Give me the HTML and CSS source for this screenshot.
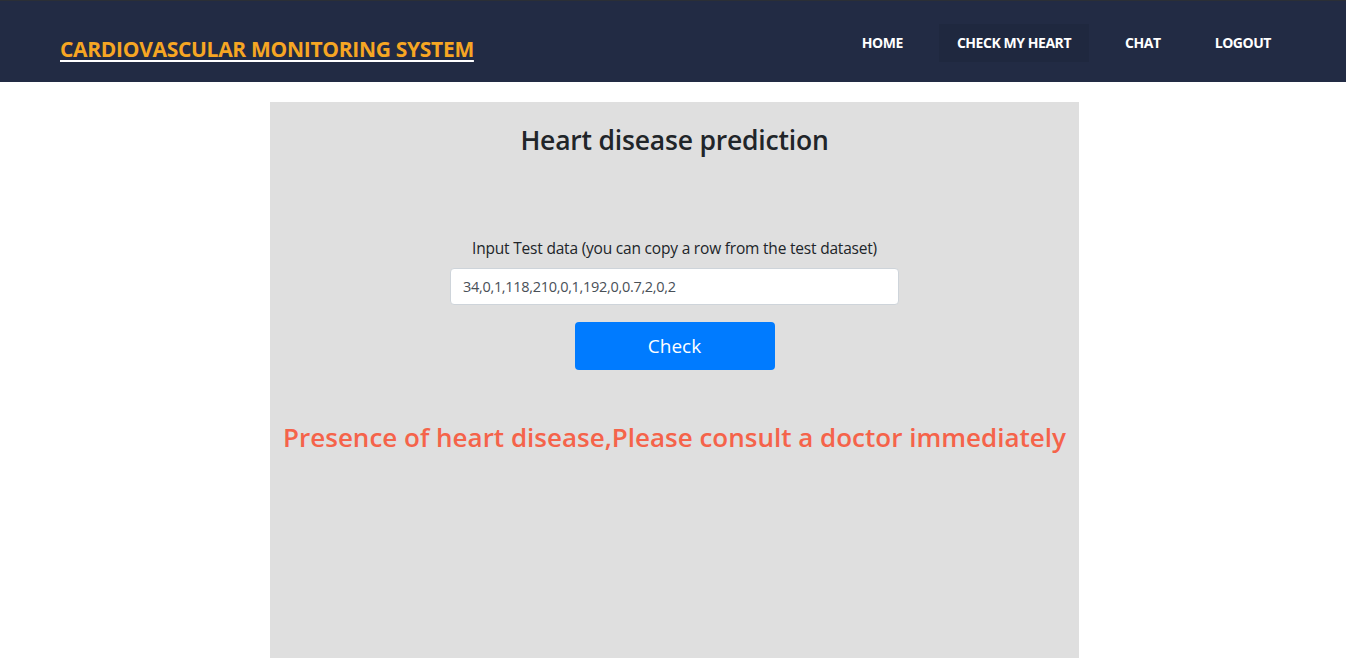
FILE: index.html
```html
<!DOCTYPE html>
<html>
<head>
<meta charset="utf-8">
<link rel="stylesheet" href="styles.css">
</head>
<body>
<header class="navbar">
  <a class="brand" href="#">CARDIOVASCULAR MONITORING SYSTEM</a>
  <nav class="nav">
    <a class="nav-link" href="#">HOME</a>
    <a class="nav-link active" href="#">CHECK MY HEART</a>
    <a class="nav-link" href="#">CHAT</a>
    <a class="nav-link" href="#">LOGOUT</a>
  </nav>
</header>
<main class="panel">
  <h1 class="title">Heart disease prediction</h1>
  <form class="form">
    <label class="label">Input Test data (you can copy a row from the test dataset)</label>
    <input class="input" type="text" value="34,0,1,118,210,0,1,192,0,0.7,2,0,2">
    <button class="btn" type="button">Check</button>
  </form>
  <h3 class="result">Presence of heart disease,Please consult a doctor immediately</h3>
</main>
</body>
</html>
```
FILE: styles.css
```css
* { box-sizing: border-box; }
html, body { margin: 0; padding: 0; }
body {
  font-family: "Open Sans", "Noto Sans", sans-serif;
  background: #fff;
  color: #212529;
  height: 658px;
  overflow: hidden;
}
.navbar {
  height: 82px;
  background: #222b44;
  border-top: 1px solid #2b2f36;
  display: flex;
  align-items: center;
  justify-content: space-between;
  padding: 0 57px 0 60px;
}
.brand {
  color: #f6a623;
  font-weight: 700;
  font-size: 21px;
  letter-spacing: -0.3px;
  text-decoration: underline;
  text-decoration-color: #ffffff;
  text-decoration-thickness: 2px;
  text-underline-offset: 3px;
  margin-top: 14px;
}
.nav {
  display: flex;
  align-items: center;
  gap: 18px;
  margin-top: 2px;
}
.nav-link {
  color: #fff;
  font-weight: 700;
  font-size: 14px;
  letter-spacing: -0.45px;
  text-decoration: none;
  padding: 10px 18px;
  line-height: 18px;
}
.nav-link.active {
  background: #1f283f;
}
.panel {
  width: 809px;
  margin: 20px 267px 0 270px;
  background: #dfdfdf;
  height: 556px;
  text-align: center;
  padding-top: 18px;
}
.title {
  margin: 0;
  font-size: 26.5px;
  font-weight: 600;
  line-height: 40px;
  letter-spacing: -0.2px;
}
.form {
  margin-top: 78px;
  display: flex;
  flex-direction: column;
  align-items: center;
}
.label {
  font-size: 15.5px;
  line-height: 20px;
  letter-spacing: -0.2px;
  margin-bottom: 10px;
}
.input {
  width: 449px;
  height: 37px;
  border: 1px solid #ced4da;
  border-radius: 4px;
  padding: 0 12px;
  font-family: inherit;
  font-size: 14.5px;
  color: #495057;
  letter-spacing: -0.3px;
}
.btn {
  margin-top: 17px;
  width: 200px;
  height: 48px;
  border: none;
  border-radius: 4px;
  background: #007bff;
  color: #fff;
  font-family: inherit;
  font-size: 19px;
}
.result {
  margin: 49px 0 0;
  color: #f5634a;
  font-size: 26px;
  font-weight: 600;
  letter-spacing: 0px;
  line-height: 36px;
}
```
